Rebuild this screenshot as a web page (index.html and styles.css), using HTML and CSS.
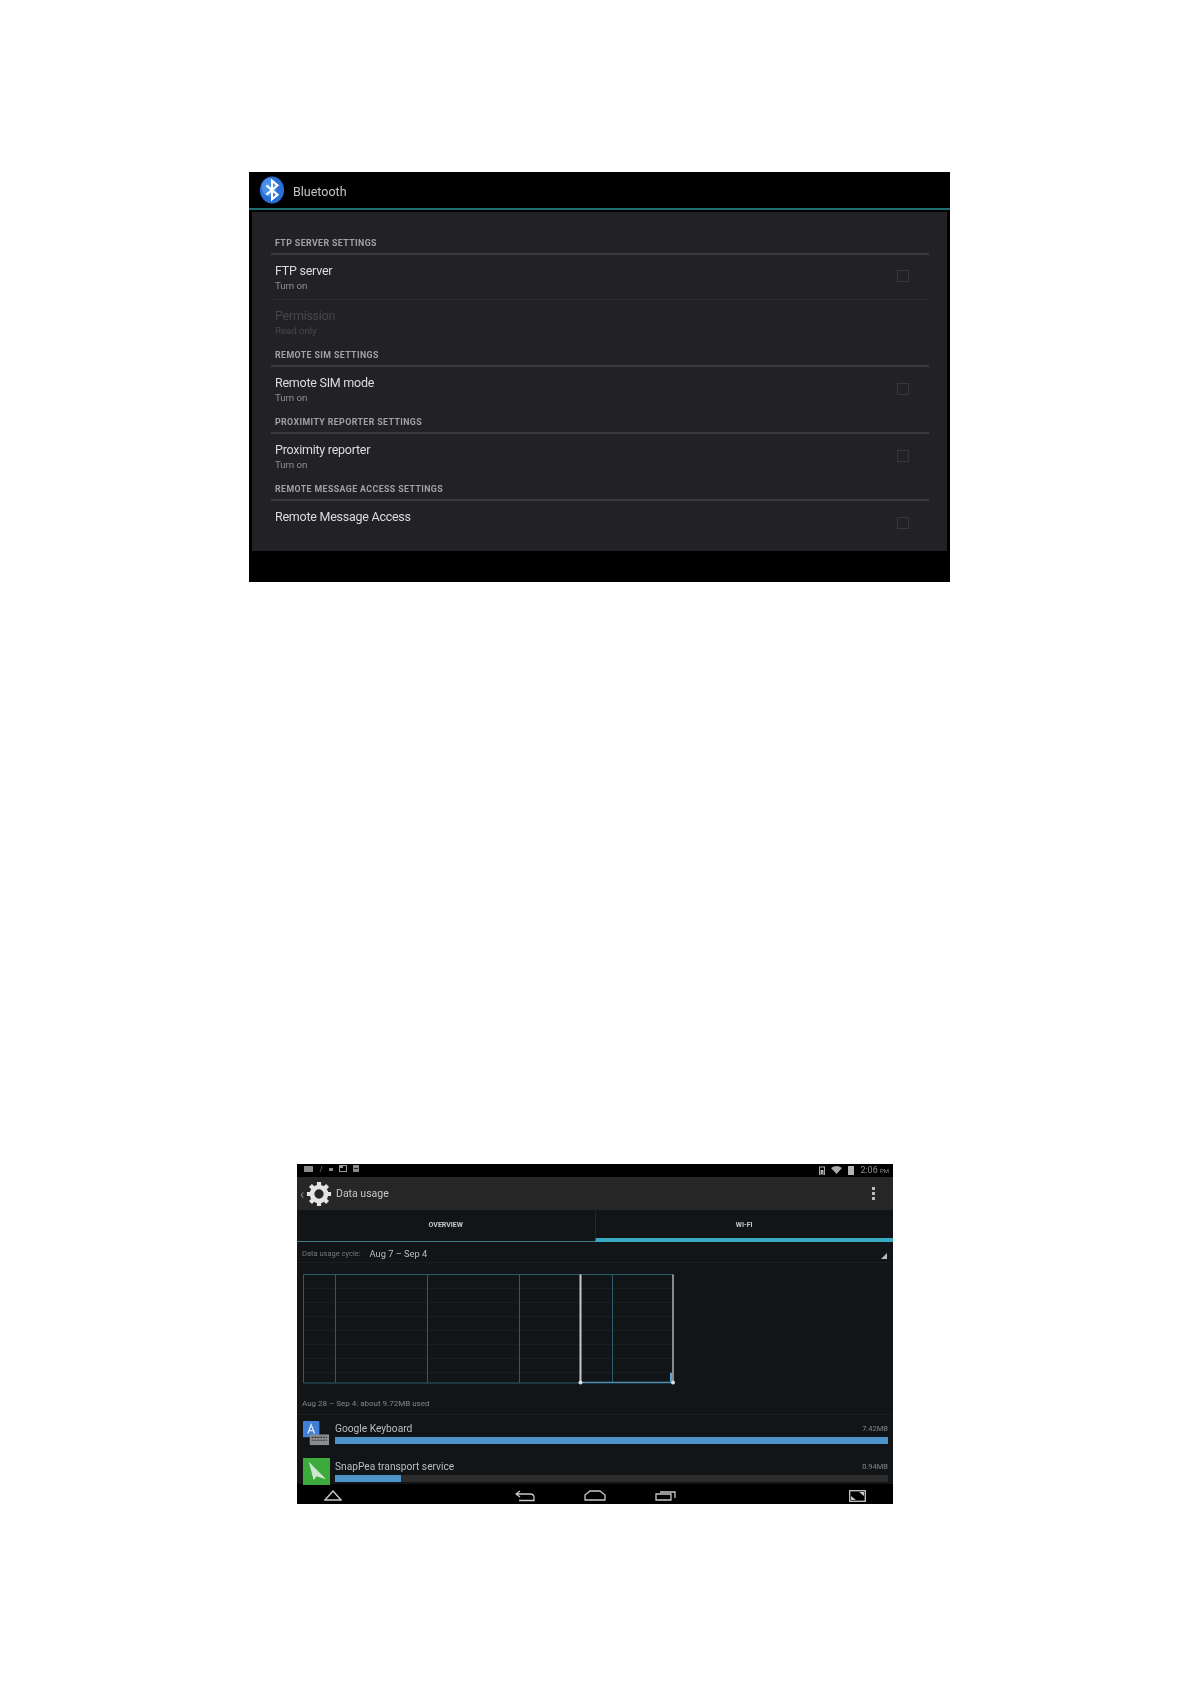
FILE: index.html
```html
<!DOCTYPE html>
<html lang="en">
<head>
  <meta charset="UTF-8" />
  <title>Bluetooth and data usage</title>
  <link rel="stylesheet" href="styles.css">
</head>
<body>

  <!-- Bluetooth settings shot -->
  <div class="shot bt">
    <div class="bt-title">
      <svg class="bt-logo" viewBox="0 0 28 30">
        <ellipse cx="14" cy="15" rx="13" ry="14.5" fill="#2a6fd6"/>
        <ellipse cx="11" cy="12" rx="8" ry="10" fill="#4a90ea"/>
        <path d="M8 10l12 10-6 5V5l6 5-12 10" fill="none" stroke="#fff" stroke-width="2.2"/>
      </svg>
      <span>Bluetooth</span>
    </div>
    <div class="bt-panel">
      <div class="head">FTP SERVER SETTINGS</div>
      <div class="row line">
        <div>
          <div class="name">FTP server</div>
          <div class="sub">Turn on</div>
        </div>
        <div class="check"></div>
      </div>
      <div class="row off">
        <div>
          <div class="name">Permission</div>
          <div class="sub">Read only</div>
        </div>
      </div>
      <div class="head">REMOTE SIM SETTINGS</div>
      <div class="row">
        <div>
          <div class="name">Remote SIM mode</div>
          <div class="sub">Turn on</div>
        </div>
        <div class="check"></div>
      </div>
      <div class="head">PROXIMITY REPORTER SETTINGS</div>
      <div class="row">
        <div>
          <div class="name">Proximity reporter</div>
          <div class="sub">Turn on</div>
        </div>
        <div class="check"></div>
      </div>
      <div class="head">REMOTE MESSAGE ACCESS SETTINGS</div>
      <div class="row">
        <div>
          <div class="name">Remote Message Access</div>
        </div>
        <div class="check"></div>
      </div>
    </div>
    <div class="bt-foot"></div>
  </div>

  <!-- Data usage shot -->
  <div class="shot du">
    <div class="status">
      <div class="status-left">
        <svg width="9" height="6" viewBox="0 0 9 6"><rect width="9" height="6" fill="#8a8a8a"/></svg>
        <svg width="4" height="6" viewBox="0 0 4 6"><path d="M3 0L1 6" stroke="#555" stroke-width="1"/></svg>
        <svg width="4" height="6" viewBox="0 0 4 6"><rect y="2" width="4" height="3" fill="#8a8a8a"/></svg>
        <svg width="8" height="7" viewBox="0 0 8 7"><rect x=".5" y=".5" width="7" height="6" fill="none" stroke="#999"/><rect x="1" y="1" width="3" height="2" fill="#999"/></svg>
        <svg width="6" height="7" viewBox="0 0 6 7"><rect width="6" height="7" fill="#8a8a8a"/><rect x="1" y="3" width="4" height="1" fill="#222"/></svg>
      </div>
      <div class="status-right">
        <svg width="6" height="9" viewBox="0 0 6 9"><rect x=".5" y="1" width="5" height="8" fill="none" stroke="#aaa"/><rect x="1.500" y="4" width="3" height="4" fill="#aaa"/></svg>
        <svg width="11" height="8" viewBox="0 0 11 8"><path d="M0 2q5.500-4 11 0L5.500 8z" fill="#aaa"/></svg>
        <svg width="6" height="9" viewBox="0 0 6 9"><rect width="6" height="9" fill="#b5b5b5"/></svg>
        <span>2:06 <small>PM</small></span>
      </div>
    </div>

    <div class="actionbar">
      <span class="caret">‹</span>
      <svg class="gear" viewBox="0 0 28 28">
        <circle cx="14" cy="14" r="7.500" fill="none" stroke="#e4e4e4" stroke-width="5"/>
        <g stroke="#e4e4e4" stroke-width="4.500">
          <path d="M14 1v6M14 21v6M1 14h6M21 14h6M4.800 4.800l4.300 4.300M18.900 18.900l4.300 4.300M4.800 23.200l4.300-4.300M18.900 9.100l4.300-4.300"/>
        </g>
      </svg>
      <span class="ab-title">Data usage</span>
      <div class="dots"><i></i><i></i><i></i></div>
    </div>

    <div class="tabs">
      <div class="tab">OVERVIEW</div>
      <div class="tab on">WI-FI</div>
    </div>

    <div class="cycle">
      <span class="cycle-label">Data usage cycle:</span>
      <span class="cycle-val">Aug 7 – Sep 4</span>
      <svg class="corner" width="6" height="6" viewBox="0 0 6 6"><path d="M6 0v6H0z" fill="#bbb"/></svg>
    </div>

    <div class="chart">
      <svg width="372" height="111" viewBox="0 0 372 111">
        <g stroke="#171d20" stroke-width="1">
          <path d="M0 14.500h370M0 28.500h370M0 42.500h370M0 56.500h370M0 70.500h370M0 84.500h370M0 98.500h370"/>
        </g>
        <g stroke="#2f5a6c" stroke-width="1" fill="none">
          <path d="M.5 .5h370M.5 .5v108.500h277M32.500 .5v108M124.500 .5v108M216.500 .5v108M309.500 .5v108"/>
        </g>
        <path d="M277.500 108.500h92" stroke="#4f93b3" stroke-width="1.500"/>
        <path d="M277.500 .5v108" stroke="#c9c9c9" stroke-width="2"/>
        <path d="M370 .5v108" stroke="#b0b0b0" stroke-width="1.500"/>
        <circle cx="277.500" cy="108.500" r="2" fill="#ddd"/>
        <circle cx="370" cy="108.500" r="2" fill="#ddd"/>
        <path d="M367 108V99q2-1 2 0v9z" fill="#59a5cf"/>
      </svg>
    </div>

    <div class="range">Aug 28 – Sep 4: about 9.72MB used</div>

    <div class="app app-first">
      <svg class="app-icon" viewBox="0 0 28 28">
        <rect x="0" y="1" width="17" height="17" rx="1" fill="#3f7fd8"/>
        <path d="M5 14l3.500-9 3.500 9M6.300 11h4.400" fill="none" stroke="#dbe8fa" stroke-width="1.400"/>
        <rect x="7" y="15" width="20" height="11" fill="#8c8c8c"/>
        <path d="M9 18h16M9 21h16" stroke="#333" stroke-width="1.200" stroke-dasharray="2 1"/>
      </svg>
      <div class="app-body">
        <div class="app-line"><span>Google Keyboard</span><span class="size">7.42MB</span></div>
        <div class="track"><div class="fill" style="width:100%"></div></div>
      </div>
    </div>

    <div class="app">
      <svg class="app-icon" viewBox="0 0 28 28">
        <rect width="28" height="28" fill="#3cab3c"/>
        <path d="M6 4l18 18-10-3-3 4-2-8z" fill="#cfe6cf"/>
      </svg>
      <div class="app-body">
        <div class="app-line"><span>SnapPea transport service</span><span class="size">0.94MB</span></div>
        <div class="track"><div class="fill" style="width:12%"></div></div>
      </div>
    </div>

    <div class="nav">
      <svg class="n-up" width="18" height="11" viewBox="0 0 18 11"><path d="M9 1L1 10h16z" fill="none" stroke="#c8c8c8" stroke-width="1.400"/></svg>
      <svg class="n-back" width="20" height="12" viewBox="0 0 20 12"><path d="M5 1L1 4l4 3M1 4h14q4 0 4 3.500v3H4" fill="none" stroke="#c8c8c8" stroke-width="1.300"/></svg>
      <svg class="n-home" width="22" height="11" viewBox="0 0 22 11"><path d="M1 10V5l5-4h10l5 4v5z" fill="none" stroke="#c8c8c8" stroke-width="1.300"/></svg>
      <svg class="n-rec" width="21" height="11" viewBox="0 0 21 11"><path d="M1 10V4h15v6zM5 2h15v6" fill="none" stroke="#c8c8c8" stroke-width="1.300"/></svg>
      <svg class="n-full" width="17" height="12" viewBox="0 0 17 12"><rect x=".7" y=".7" width="15.600" height="10.600" fill="none" stroke="#c8c8c8" stroke-width="1.300"/><path d="M10 2h5v4zM7 10H2V6z" fill="#c8c8c8"/></svg>
    </div>
  </div>

</body>
</html>
```

FILE: styles.css
```css
body {
  margin: 0;
  padding-top: 172px;
  min-height: 1512px;
  background: #fff;
  font-family: Roboto, "Liberation Sans", sans-serif;
}

.shot {
  filter: blur(0.7px);
  overflow: hidden;
}

/* Bluetooth */
.bt {
  width: 701px;
  height: 410px;
  margin-left: 249px;
  background: #000;
}

.bt-title {
  display: flex;
  align-items: center;
  gap: 8px;
  height: 36px;
  padding-left: 10px;
  border-bottom: 2px solid #1f6f72;
  color: #c4c4c4;
  font-size: 12.500px;
}

.bt-title span {
  margin-top: 2px;
}

.bt-logo {
  width: 26px;
  height: 30px;
}

.bt-panel {
  height: 339px;
  box-sizing: border-box;
  margin: 2px 3px 0 3px;
  padding: 21px 18px 0 19px;
  background: #222226;
}

.head {
  height: 22px;
  line-height: 20px;
  padding-left: 4px;
  border-bottom: 2px solid #3a3a3e;
  color: #a2a2a4;
  font-size: 8.800px;
  font-weight: 700;
  letter-spacing: 0.4px;
  box-sizing: border-box;
}

.row {
  display: flex;
  justify-content: space-between;
  align-items: center;
  height: 45px;
  box-sizing: border-box;
  padding-left: 4px;
  padding-right: 20px;
}

.row > div:first-child {
  align-self: flex-start;
  padding-top: 8px;
}

.row.line {
  border-bottom: 1px solid #2d2d31;
}

.name {
  line-height: 16px;
  color: #dcdcdc;
  font-size: 12.500px;
  letter-spacing: -0.25px;
}

.sub {
  line-height: 14px;
  color: #8d8d92;
  font-size: 9.800px;
  letter-spacing: -0.1px;
}

.off .name,
.off .sub {
  color: #47474b;
}

.check {
  width: 10px;
  height: 10px;
  margin-top: -2px;
  border: 1px solid #37373b;
}

/* Data usage */
.du {
  width: 596px;
  height: 340px;
  margin-top: 582px;
  margin-left: 297px;
  background: #111518;
  color: #bdbdbd;
}

.status {
  display: flex;
  justify-content: space-between;
  align-items: flex-start;
  height: 13px;
  padding: 1px 4px 0 7px;
  box-sizing: border-box;
  background: #000;
}

.status-left,
.status-right {
  display: flex;
  align-items: center;
  gap: 6px;
}

.status-right {
  color: #8f8f8f;
  font-size: 9px;
}

.status-right small {
  font-size: 6px;
}

.actionbar {
  display: flex;
  align-items: center;
  height: 33px;
  padding-left: 3px;
  background: #262626;
}

.caret {
  width: 6px;
  color: #888;
  font-size: 14px;
}

.gear {
  width: 26px;
  height: 26px;
}

.ab-title {
  margin-left: 4px;
  color: #c6c6c6;
  font-size: 10.500px;
}

.dots {
  display: flex;
  flex-direction: column;
  gap: 2px;
  margin-left: auto;
  margin-right: 18px;
}

.dots i {
  display: block;
  width: 3px;
  height: 3px;
  background: #bbb;
}

.tabs {
  display: flex;
  height: 32px;
  box-sizing: border-box;
}

.tab {
  flex: 1;
  height: 32px;
  box-sizing: border-box;
  padding-top: 11px;
  border-bottom: 1px solid #3f7d8a;
  color: #c8c8c8;
  font-size: 7px;
  font-weight: 700;
  text-align: center;
}

.tab.on {
  border-left: 1px solid #20282c;
  border-bottom: 4px solid #38a9c2;
}

.cycle {
  display: flex;
  align-items: center;
  height: 21px;
  padding: 2px 6px 0 5px;
  box-sizing: border-box;
  border-bottom: 1px solid #1a1e21;
}

.cycle-label {
  color: #777;
  font-size: 7.500px;
}

.cycle-val {
  margin-left: 9px;
  font-size: 9.300px;
}

.corner {
  margin-left: auto;
  margin-top: 6px;
}

.chart {
  height: 111px;
  padding: 11px 0 0 6px;
}

.chart svg {
  display: block;
}

.range {
  height: 30px;
  box-sizing: border-box;
  padding: 14px 0 0 5px;
  color: #858585;
  font-size: 8px;
  border-bottom: 1px solid #1a1e21;
}

.app {
  display: flex;
  height: 35px;
  box-sizing: border-box;
  padding: 11px 5px 0 6px;
}

.app-first {
  height: 34px;
  padding-top: 7px;
}

.app-icon {
  flex: none;
  width: 27px;
  height: 27px;
  margin-top: -2px;
}

.app-body {
  flex: 1;
  margin-left: 5px;
}

.app-line {
  display: flex;
  justify-content: space-between;
  height: 14px;
  line-height: 14px;
  font-size: 10.200px;
}

.size {
  color: #858585;
  font-size: 7.500px;
}

.track {
  height: 7px;
  margin-top: 1px;
  background: #2c2c2c;
}

.fill {
  height: 100%;
  background: #4b93c9;
}

.nav {
  display: flex;
  align-items: center;
  height: 21px;
  padding-top: 2px;
  box-sizing: border-box;
  background: #000;
}

.n-up { margin-left: 27px; }
.n-back { margin-left: 173px; }
.n-home { margin-left: 49px; }
.n-rec { margin-left: 49px; }
.n-full { margin-left: 173px; }
```
